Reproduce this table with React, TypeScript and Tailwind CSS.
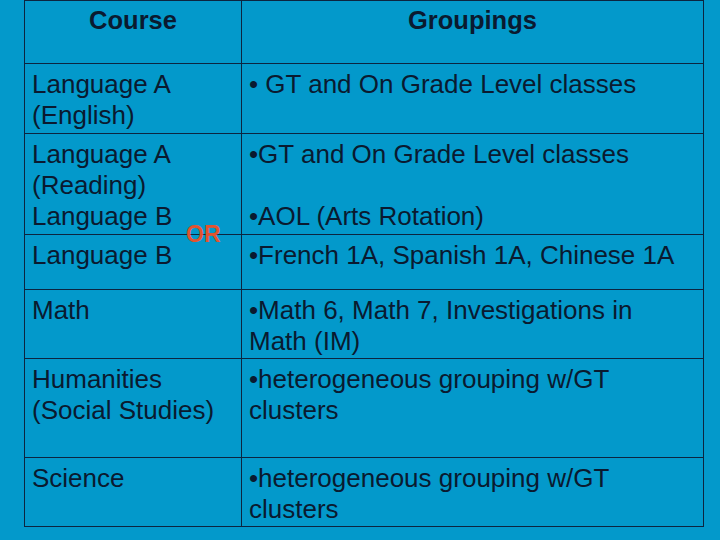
import React from "react";

const cell = "border border-[#0c2540] align-top px-[7px] pt-[5px] text-left font-normal";

export default function App() {
  return (
    <div
      className="w-[720px] h-[540px] bg-[#0399cb] text-[#0a1a30] text-[26px] leading-[31px] overflow-hidden"
      style={{ fontFamily: '"Liberation Sans", Arial, sans-serif' }}
    >
      <div className="relative ml-[24px] w-[679px]">
        <table className="w-[679px] border-collapse table-fixed">
          <colgroup>
            <col className="w-[217px]" />
            <col className="w-[462px]" />
          </colgroup>
          <tbody>
            <tr className="h-[63px]">
              <th className="border border-[#0c2540] align-top pt-[4px] text-center font-bold text-[25.5px]">Course</th>
              <th className="border border-[#0c2540] align-top pt-[4px] text-center font-bold text-[25.5px]">Groupings</th>
            </tr>
            <tr className="h-[70px]">
              <td className={cell}>Language A<br />(English)</td>
              <td className={cell}>• GT and On Grade Level classes</td>
            </tr>
            <tr className="h-[101px]">
              <td className={cell}>Language A<br />(Reading)<br />Language B</td>
              <td className={cell}>•GT and On Grade Level classes<br /><br />•AOL (Arts Rotation)</td>
            </tr>
            <tr className="h-[55px]">
              <td className={cell}>Language B</td>
              <td className={cell}>•French 1A, Spanish 1A, Chinese 1A</td>
            </tr>
            <tr className="h-[69px]">
              <td className={cell}>Math</td>
              <td className={cell}>•Math 6, Math 7, Investigations in<br />Math (IM)</td>
            </tr>
            <tr className="h-[99px]">
              <td className={cell}>Humanities<br />(Social Studies)</td>
              <td className={cell}>•heterogeneous grouping w/GT<br />clusters</td>
            </tr>
            <tr className="h-[69px]">
              <td className={cell}>Science</td>
              <td className={cell}>•heterogeneous grouping w/GT<br />clusters</td>
            </tr>
          </tbody>
        </table>
        <span className="absolute left-[162px] top-[221px] text-[23px] leading-[26px] font-bold text-[#e2532f]">OR</span>
      </div>
    </div>
  );
}
